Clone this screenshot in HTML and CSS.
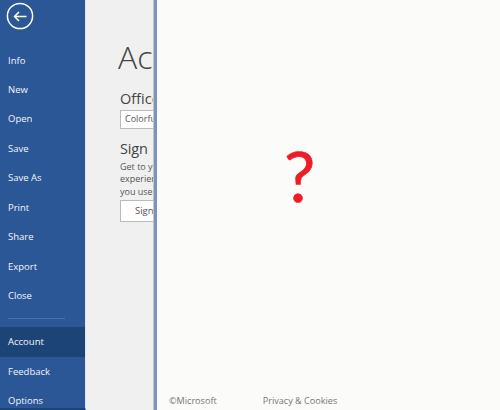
FILE: index.html
```html
<!DOCTYPE html>
<html lang="en">
<head>
<meta charset="utf-8">
<title>Account</title>
<link rel="stylesheet" href="styles.css">
</head>
<body>
<div class="app">
  <nav class="side">
    <div class="back">
      <svg width="28" height="28" viewBox="0 0 28 28" fill="none" stroke="#fff">
        <circle cx="14" cy="14" r="12.6" stroke-width="1.5"/>
        <path d="M20.5 14.5H8.5M13 10L8.5 14.5L13 19" stroke-width="1.5"/>
      </svg>
    </div>
    <ul class="menu">
      <li>Info</li><li>New</li><li>Open</li><li>Save</li><li>Save As</li><li>Print</li><li>Share</li><li>Export</li><li>Close</li>
    </ul>
    <div class="rule"></div>
    <ul class="menu">
      <li class="on">Account</li><li>Feedback</li><li>Options</li>
    </ul>
  </nav>
  <main class="account">
    <h1>Account</h1>
    <h2 class="theme">Office Theme</h2>
    <div class="select">Colorful</div>
    <h2 class="sign">Sign in to Office</h2>
    <p>Get to your documents<br>experience, and more<br>you use Office</p>
    <div class="btn">Sign In</div>
  </main>
  <section class="panel">
    <div class="q">?</div>
    <footer class="foot"><span>©Microsoft</span><span>Privacy &amp; Cookies</span></footer>
  </section>
</div>
</body>
</html>
```
FILE: styles.css
```css
* { box-sizing: border-box; }
html, body { margin: 0; height: 100%; }
body { font-family: "Open Sans", sans-serif; overflow: hidden; background: #f0f0f0; }
.app { display: flex; width: 500px; height: 410px; overflow: hidden; }
.side { flex: 0 0 86px; background: #2b5797; border-right: 1px solid #dfe6f0; border-bottom: 2px solid #1d4477; color: #fff; height: 410px; overflow: hidden; }
.back { height: 45.5px; padding: 2px 0 0 5.5px; }
.menu { list-style: none; margin: 0; padding: 0; }
.menu li { height: 29.45px; line-height: 29px; padding-left: 8px; font-size: 9.5px; font-weight: 500; color: #f1f5fa; }
.menu li.on { background: #1d4477; }
.rule { height: 1px; margin: 8px 20px 8px 8px; background: #4a71a8; }
.account { flex: 0 0 68px; width: 68px; padding-left: 34px; background: #f0f0f0; overflow: hidden; white-space: nowrap; color: #444; }
.account > * { width: 33px; overflow: hidden; }
.account h1 { font-weight: 300; font-size: 32px; line-height: 36px; margin: 39px 0 0 -2px; color: #444; width: 35px; }
.account h2 { font-weight: 400; margin: 0; color: #444; }
.theme { font-size: 14.5px; line-height: 20px; margin-top: 14px !important; }
.select { height: 19px; margin-top: 1px; padding-left: 4px; font-size: 9px; line-height: 16px; font-weight: 500; background: #fff; border: 1px solid #bbb; border-right: 0; color: #555; }
.account .sign { font-size: 14.5px; line-height: 22px; margin-top: 9px; letter-spacing: -0.2px; width: 31px; }
.account p { margin: 1px 0 0; font-size: 9px; line-height: 12.4px; font-weight: 500; color: #555; }
.btn { height: 22px; margin-top: 2px; padding-left: 14px; font-size: 9.5px; line-height: 19px; font-weight: 500; background: #fff; border: 1px solid #bbb; border-right: 0; color: #555; }
.panel { flex: 1; display: flex; flex-direction: column; background: #fbfcfa; border-left: 3px solid #7e93ba; box-shadow: -1px 0 0 #c6c6c6; }
.q { flex: 1; padding: 133px 0 0 127px; font-family: Lato, sans-serif; font-size: 70px; line-height: 84px; color: #ee1c25; -webkit-text-stroke: 0.6px #ee1c25; }
.foot { display: flex; gap: 46px; height: 18px; padding-left: 12px; font-size: 9.1px; line-height: 17px; color: #767676; }
```
